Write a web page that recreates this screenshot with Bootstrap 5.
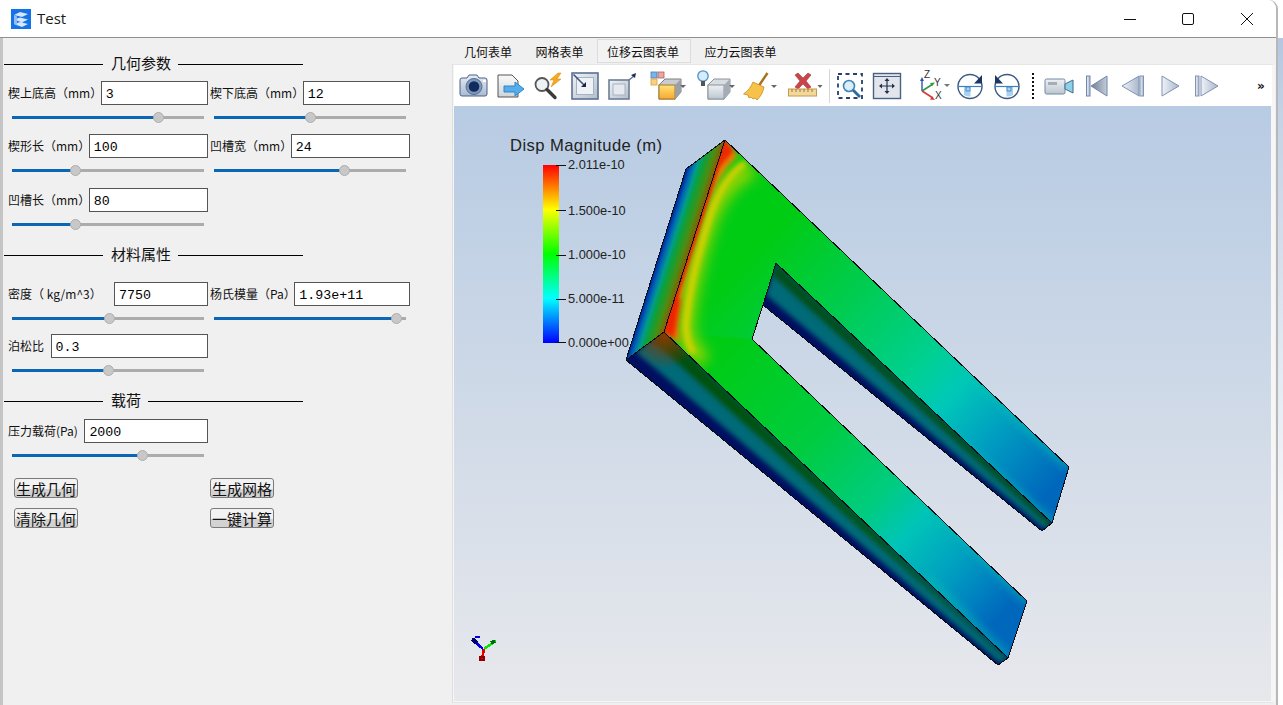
<!DOCTYPE html>
<html lang="zh-CN">
<head>
<meta charset="utf-8">
<title>Test</title>
<link href="https://cdn.jsdelivr.net/npm/bootstrap@5.3.0/dist/css/bootstrap.min.css" rel="stylesheet">
<style>
html,body{height:705px;overflow:hidden;background:#fff;}
body{font-family:"Noto Sans CJK SC","Noto Sans",sans-serif;font-size:12px;color:#111;}
.stage{width:1283px;height:705px;background:linear-gradient(#fff 38px,#b4c7e0 38px,#c3d2e5 110px,#fff 600px);}
.wnd{width:1278px;height:705px;border-right:2px solid #b8b8b8;background:#f0f0f0;border-top-right-radius:9px;border-top-left-radius:9px;}
.ttl{height:38px;background:#fff;border-bottom:1px solid #8f8f8f;border-top-right-radius:9px;border-top-left-radius:9px;padding-left:11px;}
.ttl-txt{font-family:"Open Sans",sans-serif;font-size:15px;margin-left:6px;color:#1a1a1a;}
.wb{width:58.5px;height:37px;}
.wmain{height:667px;border-left:3px solid #c4c4c4;box-shadow:inset 1px 0 0 #8f8f8f;}
.leftp{width:448px;background:#f0f0f0;padding-top:15px;flex:none;}
.sec{width:299px;height:22px;padding-bottom:2px;margin-left:1px;font-size:15px;color:#111;line-height:20px;}
.sec-a{width:99px;height:1px;background:#000;margin-top:2px;}
.sec-b{height:1px;background:#000;margin-top:2px;}
.sec-t{margin:0 7px 0 8px;}
.frow{margin-left:5px;width:404px;}
.fcol{width:200px;margin-right:2px;flex:none;}
.flbl{margin-right:-1.5px;white-space:nowrap;line-height:24px;flex:none;}
.flbl-p{margin-right:6.500px;}
.w-dens{width:106px;margin-right:0;}
.qin.form-control{height:24px;min-height:24px;padding:3px 4px 0;border:1px solid #555;border-radius:0;font-family:"Liberation Mono",monospace;font-size:13.3px;line-height:18px;color:#000;background:#fff;min-width:0;flex:1 1 0;}
.sl.form-range{display:block;width:192px;height:24px;margin-left:4px;padding:0;}
.sl.form-range::-webkit-slider-runnable-track{height:3px;border-radius:0;background:linear-gradient(to right,#0c66b6 var(--p),#acacac var(--p));}
.sl.form-range::-webkit-slider-thumb{width:11px;height:11px;margin-top:-4px;background:#c8c8c8;border:1px solid #aeaeae;border-radius:50%;box-shadow:none;}
.m5{margin-bottom:5px;}.m6{margin-bottom:6px;}.m7{margin-bottom:7px;}.m8t{margin-top:8px;}.m10{margin-top:10px;}.m11{margin-top:11px;}
.m16{margin-bottom:16px;}.m4{margin-bottom:4px;}
.bts{margin-left:11px;}
.qbtn.btn{width:64px;height:20px;padding:0;margin-right:132px;font-family:"Noto Sans CJK SC",sans-serif;font-size:15px;line-height:17px;color:#111;border:1px solid #7a7a7a;border-radius:3px;background:linear-gradient(#f2f2f2 55%,#d2d2d2 55%);white-space:nowrap;}
.rightp{flex:1 1 auto;padding-left:1px;min-width:0;}
.qtabs.nav-tabs{height:26px;border:0;gap:3.5px;padding:1px 0 0 2px;}
.qtabs .nav-link{height:24px;padding:0 9px;font-size:12px;line-height:24px;color:#111;border:1px solid transparent;border-radius:0;background:transparent;}
.qtabs .nav-link.active{background:#f3f3f3;border-color:#dcdcdc;color:#111;padding-right:11px;}
.frame{width:823px;height:639px;border:1px solid #e6e6e6;border-left-color:#dedede;border-right:3px solid #f6f6f6;background:#f6f6f6;padding-left:1px;}
.tbar{height:41px;background:#fff;padding-left:1.5px;}
.tb{width:37px;height:41px;flex:none;}
.tb-d{width:49px;height:41px;flex:none;}
.tb-e{width:41px;height:41px;flex:none;}
.tsep{width:1px;height:34px;background:#d6d6d6;margin:0 2px 0 0;}
.tdots{width:0;height:26px;border-left:2px dotted #111;margin:0 7px 0 6px;}
.gap9{margin-left:9px;}
.more{margin-left:auto;width:15px;font-weight:700;font-size:12px;font-family:"DejaVu Sans",sans-serif;color:#111;}
.view{width:817px;height:595px;background:linear-gradient(#b7cbe3,#e7e8ec);}
.view svg{display:block;}
.cbtxt{font-family:"Liberation Sans",sans-serif;font-size:12.8px;fill:#222;}
.cbttl{font-family:"Liberation Sans",sans-serif;font-size:16.6px;fill:#222;letter-spacing:.42px;}
.axt{font-family:"Liberation Sans",sans-serif;font-size:10px;fill:#333;}
</style>
</head>
<body>
<svg width="0" height="0" class="d-block">
<defs>
<linearGradient id="gCam" x1="0" y1="0" x2="0" y2="1"><stop offset="0" stop-color="#e6ecf4"/><stop offset="1" stop-color="#a9bbd2"/></linearGradient>
<linearGradient id="gPap" x1="0" y1="0" x2="0" y2="1"><stop offset="0" stop-color="#fafafa"/><stop offset="1" stop-color="#cfd4da"/></linearGradient>
<linearGradient id="gFr" x1="0" y1="0" x2="1" y2="1"><stop offset="0" stop-color="#f0f3f7"/><stop offset="1" stop-color="#b4bdc9"/></linearGradient>
<linearGradient id="gOr" x1="0" y1="0" x2="0" y2="1"><stop offset="0" stop-color="#ffe27a"/><stop offset="1" stop-color="#f7a92c"/></linearGradient>
<linearGradient id="gGy" x1="0" y1="0" x2="0" y2="1"><stop offset="0" stop-color="#eef1f4"/><stop offset="1" stop-color="#bcc6d0"/></linearGradient>
<linearGradient id="gTri" x1="0" y1="0" x2="1" y2="0"><stop offset="0" stop-color="#f0f3f8"/><stop offset="1" stop-color="#aab6ca"/></linearGradient>
<linearGradient id="gTriD" x1="0" y1="0" x2="1" y2="0"><stop offset="0" stop-color="#6f7f95"/><stop offset="1" stop-color="#c4ccd8"/></linearGradient>
</defs>
</svg>
<div class="stage">
<div class="wnd d-flex flex-column">
  <div class="ttl d-flex align-items-center">
    <svg width="20" height="20" viewBox="0 0 20 20"><rect width="20" height="20" fill="#1473e6"/><path d="M3 6 9 3l8 2-6 3zM3 10.500l6-2 8 2-6 3zM3 15l6-2 8 2-6 3z" fill="#d6e6fb"/><path d="M3 6v9l3 1.500V7.500z" fill="#8fbdf4"/></svg>
    <span class="ttl-txt">Test</span>
    <div class="ms-auto d-flex">
      <div class="wb d-flex align-items-center justify-content-center"><svg width="14" height="14" viewBox="0 0 14 14"><path d="M1 7.500h12" stroke="#111" fill="none"/></svg></div>
      <div class="wb d-flex align-items-center justify-content-center"><svg width="14" height="14" viewBox="0 0 14 14"><rect x="1.500" y="1.500" width="11" height="11" rx="1.500" stroke="#111" fill="none"/></svg></div>
      <div class="wb d-flex align-items-center justify-content-center"><svg width="14" height="14" viewBox="0 0 14 14"><path d="M1 1l12 12M13 1 1 13" stroke="#111" fill="none"/></svg></div>
    </div>
  </div>
  <div class="wmain d-flex">
    <div class="leftp">
      <div class="sec d-flex align-items-center m6"><div class="sec-a"></div><span class="sec-t">几何参数</span><div class="sec-b flex-grow-1"></div></div>
      <div class="frow d-flex m5">
        <div class="fcol"><div class="d-flex"><span class="flbl">楔上底高（mm）</span><input class="qin form-control" value="3"></div><input type="range" class="sl form-range" min="0" max="100" step="any" value="77.9" style="--p:76%"></div>
        <div class="fcol"><div class="d-flex"><span class="flbl">楔下底高（mm）</span><input class="qin form-control" value="12"></div><input type="range" class="sl form-range" min="0" max="100" step="any" value="50.4" style="--p:50%"></div>
      </div>
      <div class="frow d-flex m6">
        <div class="fcol"><div class="d-flex"><span class="flbl">楔形长（mm）</span><input class="qin form-control" value="100"></div><input type="range" class="sl form-range" min="0" max="100" step="any" value="31.8" style="--p:33%"></div>
        <div class="fcol"><div class="d-flex"><span class="flbl">凹槽宽（mm）</span><input class="qin form-control" value="24"></div><input type="range" class="sl form-range" min="0" max="100" step="any" value="69.2" style="--p:68%"></div>
      </div>
      <div class="frow d-flex">
        <div class="fcol"><div class="d-flex"><span class="flbl">凹槽长（mm）</span><input class="qin form-control" value="80"></div><input type="range" class="sl form-range" min="0" max="100" step="any" value="31.8" style="--p:33%"></div>
      </div>
      <div class="sec d-flex align-items-center m8t m16"><div class="sec-a"></div><span class="sec-t">材料属性</span><div class="sec-b flex-grow-1"></div></div>
      <div class="frow d-flex m4">
        <div class="fcol"><div class="d-flex"><span class="flbl w-dens">密度（ kg/m^3）</span><input class="qin form-control" value="7750"></div><input type="range" class="sl form-range" min="0" max="100" step="any" value="50.6" style="--p:51%"></div>
        <div class="fcol"><div class="d-flex"><span class="flbl">杨氏模量（Pa）</span><input class="qin form-control" value="1.93e+11"></div><input type="range" class="sl form-range" min="0" max="100" step="any" value="97.7" style="--p:95%"></div>
      </div>
      <div class="frow d-flex">
        <div class="fcol"><div class="d-flex"><span class="flbl flbl-p">泊松比</span><input class="qin form-control" value="0.3"></div><input type="range" class="sl form-range" min="0" max="100" step="any" value="50" style="--p:50%"></div>
      </div>
      <div class="sec d-flex align-items-center m8t m7"><div class="sec-a"></div><span class="sec-t">载荷</span><div class="sec-b flex-grow-1"></div></div>
      <div class="frow d-flex">
        <div class="fcol"><div class="d-flex"><span class="flbl flbl-p">压力载荷(Pa)</span><input class="qin form-control" value="2000"></div><input type="range" class="sl form-range" min="0" max="100" step="any" value="68.8" style="--p:68%"></div>
      </div>
      <div class="bts d-flex m11"><button class="qbtn btn">生成几何</button><button class="qbtn btn">生成网格</button></div>
      <div class="bts d-flex m10"><button class="qbtn btn">清除几何</button><button class="qbtn btn">一键计算</button></div>
    </div>
    <div class="rightp">
      <ul class="qtabs nav nav-tabs">
        <li class="nav-item"><a class="nav-link" href="#">几何表单</a></li>
        <li class="nav-item"><a class="nav-link" href="#">网格表单</a></li>
        <li class="nav-item"><a class="nav-link active" href="#">位移云图表单</a></li>
        <li class="nav-item"><a class="nav-link" href="#">应力云图表单</a></li>
      </ul>
      <div class="frame">
        <div class="tbar d-flex align-items-center">
          <!-- camera -->
          <div class="tb d-flex align-items-center justify-content-center"><svg width="30" height="28" viewBox="0 0 30 28"><path d="M3 6h5l2-3h8l2 3h6a2 2 0 0 1 2 2v14a2 2 0 0 1-2 2H3a2 2 0 0 1-2-2V8a2 2 0 0 1 2-2z" fill="url(#gCam)" stroke="#4b6386"/><circle cx="15" cy="14.500" r="8" fill="#7c98bb" stroke="#56708f"/><circle cx="15" cy="14.500" r="5.300" fill="#132a5e"/><rect x="24" y="8" width="3" height="2" fill="#fff"/></svg></div>
          <!-- export -->
          <div class="tb d-flex align-items-center justify-content-center"><svg width="30" height="28" viewBox="0 0 30 28"><path d="M2 3h14l6 6v16H2z" fill="url(#gPap)" stroke="#555"/><path d="M8 14h11v-4l9 7-9 7v-4H8z" fill="#55ace9" stroke="#2f86cb"/></svg></div>
          <!-- find data -->
          <div class="tb d-flex align-items-center justify-content-center"><svg width="30" height="28" viewBox="0 0 30 28"><circle cx="9" cy="12.500" r="6.500" fill="#eef2f6" stroke="#555" stroke-width="1.800"/><path d="M14 17.500l8 8" stroke="#3a3a3a" stroke-width="3.400" stroke-linecap="round"/><path d="M25 1l-8 7h4l-3 7 10-8h-4l4-6z" fill="#f6a81f" stroke="#d88708" stroke-width=".5"/></svg></div>
          <!-- reset 1 -->
          <div class="tb d-flex align-items-center justify-content-center"><svg width="28" height="28" viewBox="0 0 28 28"><rect x="1" y="1" width="26" height="26" fill="url(#gFr)" stroke="#5b7195" stroke-width="1.600"/><rect x="5.500" y="5.500" width="17" height="17" fill="#eef1f5" stroke="#a6b2c4"/><path d="M2.500 2.500 13 13" stroke="#3f5578" stroke-width="1.600"/><path d="M15 15H10l5-5z" fill="#14264c"/></svg></div>
          <!-- reset 2 -->
          <div class="tb d-flex align-items-center justify-content-center"><svg width="30" height="28" viewBox="0 0 30 28"><rect x="2" y="8" width="20" height="19" fill="url(#gFr)" stroke="#6c7e96" stroke-width="1.600"/><rect x="6" y="12" width="12" height="11" fill="#e6eaf0" stroke="#a6b2c4"/><path d="M22 8l5-4" stroke="#5b7195" stroke-width="1.400"/><path d="M29 1l-1 5-4-3z" fill="#1b3060"/></svg></div>
          <!-- color cube -->
          <div class="tb-d d-flex align-items-center"><svg width="49" height="41" viewBox="0 0 49 41"><rect x="10" y="7" width="6" height="6" fill="#7fb2e8" stroke="#3d7fc4" stroke-width=".8"/><rect x="17" y="7" width="6" height="6" fill="#e7a7a7" stroke="#b06060" stroke-width=".8"/><rect x="10" y="14" width="6" height="6" fill="#f8d27e" stroke="#d8a040" stroke-width=".8"/><path d="M18 20l6-6h16v13l-6 7H18z" fill="#c8ccd2" stroke="#7b7f85"/><rect x="18" y="20" width="16" height="14" fill="url(#gOr)" stroke="#a87822"/><path d="M34 20l6-6v13l-6 7z" fill="#9aa0a8"/><path d="M39 20h6l-3 3z" fill="#666"/></svg></div>
          <!-- bulb cube -->
          <div class="tb-d d-flex align-items-center"><svg width="49" height="41" viewBox="0 0 49 41"><path d="M18 20l6-6h16v13l-6 7H18z" fill="#d8dde2" stroke="#8b929a"/><rect x="18" y="20" width="16" height="14" fill="url(#gGy)" stroke="#8b929a"/><path d="M34 20l6-6v13l-6 7z" fill="#a4acb6"/><circle cx="13" cy="11" r="5.200" fill="#d4ecfb" stroke="#4d90c8" stroke-width="1.300"/><rect x="11" y="16" width="4" height="5" fill="#555"/><path d="M39 20h6l-3 3z" fill="#666"/></svg></div>
          <!-- broom -->
          <div class="tb-d d-flex align-items-center"><svg width="49" height="41" viewBox="0 0 49 41"><path d="M28.500 8 19 22" stroke="#a8701c" stroke-width="2.400"/><path d="M14 17 25 22C24 28 21 32 18 35L16 33 14 34 12 32 10 33 9 30 4.500 29C9 26 12 22 14 17Z" fill="#f7c24a" stroke="#c98b1d" stroke-width=".8"/><path d="M32 20h6l-3 3z" fill="#666"/></svg></div>
          <!-- delete ruler -->
          <div class="tb-e d-flex align-items-center"><svg width="37" height="41" viewBox="0 0 37 41"><path d="M7 10l3-2 5 5 5-5 3 2-5 6 5 6-3 2-5-5-5 5-3-2 5-6z" fill="#c9454a" stroke="#a83035" stroke-width=".6"/><rect x=".5" y="24" width="28" height="7" fill="#f2d89a" stroke="#c79a4a"/><path d="M4 24v3M8 24v3M12 24v3M16 24v3M20 24v3M24 24v3" stroke="#9b7a3a"/><path d="M29.500 20h5l-2.500 3z" fill="#666"/></svg></div>
          <div class="tsep"></div>
          <!-- zoom box -->
          <div class="tb d-flex align-items-center justify-content-center"><svg width="28" height="28" viewBox="0 0 28 28"><rect x="2" y="2" width="24" height="24" fill="#fff" stroke="#27406f" stroke-width="1.800" stroke-dasharray="4 3.500"/><circle cx="13" cy="14" r="5.500" fill="#dcedf8" stroke="#3a86b8" stroke-width="1.600"/><path d="M17 18l7 7" stroke="#2a6a9c" stroke-width="2.800"/></svg></div>
          <!-- pan window -->
          <div class="tb d-flex align-items-center justify-content-center"><svg width="30" height="28" viewBox="0 0 30 28"><rect x="1.500" y="1.500" width="27" height="25" fill="#e2e6ec" stroke="#4a6080" stroke-width="1.400"/><path d="M1.500 4.500h27" stroke="#4a6080"/><path d="M15 8v12M9 14h12" stroke="#22314f" stroke-width="1.200"/><path d="M15 6l-2.500 3h5zM15 22l-2.500-3h5zM7 14l3-2.500v5zM23 14l-3-2.500v5z" fill="#22314f"/></svg></div>
          <!-- axes -->
          <div class="tb gap9 d-flex align-items-center justify-content-center"><svg width="37" height="41" viewBox="0 0 37 41"><path d="M7 26V15" stroke="#2b55b5" stroke-width="1.400"/><path d="M7 12l-2 4h4z" fill="#2b55b5"/><path d="M7 26l11-7" stroke="#2d9a3e" stroke-width="1.600"/><path d="M20 17.500l-5 .5 2 3z" fill="#2d9a3e"/><path d="M7 26l11 7" stroke="#d43838" stroke-width="1.600"/><path d="M20 35l-5-.5 2-3z" fill="#d43838"/><text x="9" y="13" class="axt">Z</text><text x="19" y="21" class="axt">Y</text><text x="20" y="34" class="axt">X</text><path d="M29 19h6l-3 3z" fill="#777"/></svg></div>
          <!-- rotate cw -->
          <div class="tb d-flex align-items-center justify-content-center"><svg width="28" height="28" viewBox="0 0 28 28"><path d="M8 14.500h6.500v10A11 11 0 0 1 8 23z" fill="#a8d3f0"/><circle cx="14" cy="14.500" r="12" fill="none" stroke="#3d5a80" stroke-width="1.400"/><path d="M2 14.500h24" stroke="#3d7fc0" stroke-width="1.200"/><rect x="10" y="15" width="4" height="4" fill="none" stroke="#3d7fc0" stroke-width=".8"/><path d="M26 3v8.500h-8z" fill="#1c3764"/></svg></div>
          <!-- rotate ccw -->
          <div class="tb d-flex align-items-center justify-content-center"><svg width="28" height="28" viewBox="0 0 28 28"><path d="M20 14.500h-6.500v10A11 11 0 0 0 20 23z" fill="#a8d3f0"/><circle cx="14" cy="14.500" r="12" fill="none" stroke="#3d5a80" stroke-width="1.400"/><path d="M2 14.500h24" stroke="#3d7fc0" stroke-width="1.200"/><rect x="14" y="15" width="4" height="4" fill="none" stroke="#3d7fc0" stroke-width=".8"/><path d="M2 3v8.500h8z" fill="#1c3764"/></svg></div>
          <div class="tdots"></div>
          <!-- video -->
          <div class="tb d-flex align-items-center justify-content-center"><svg width="30" height="28" viewBox="0 0 30 28"><rect x="1" y="7" width="20" height="15" rx="1.500" fill="url(#gGy)" stroke="#7388a4"/><rect x="4" y="10" width="9" height="3" fill="#a5adb8"/><path d="M21 12l8-4v13l-8-4z" fill="#8fd0e4" stroke="#3d6a90"/></svg></div>
          <!-- first -->
          <div class="tb d-flex align-items-center justify-content-center"><svg width="24" height="24" viewBox="0 0 24 24"><rect x="2.500" y="2" width="3.500" height="20" fill="url(#gTri)" stroke="#7187ab"/><path d="M23 2 7 12l16 10z" fill="url(#gTriD)" stroke="#7187ab"/></svg></div>
          <!-- prev -->
          <div class="tb d-flex align-items-center justify-content-center"><svg width="24" height="24" viewBox="0 0 24 24"><path d="M1 12 18 2v20z" fill="url(#gTri)" stroke="#7f93b5"/><rect x="19" y="2" width="3.500" height="20" fill="url(#gTri)" stroke="#7f93b5"/></svg></div>
          <!-- next -->
          <div class="tb d-flex align-items-center justify-content-center"><svg width="24" height="24" viewBox="0 0 24 24"><path d="M4 2l17 10L4 22z" fill="url(#gTri)" stroke="#7f93b5"/></svg></div>
          <!-- last -->
          <div class="tb d-flex align-items-center justify-content-center"><svg width="26" height="24" viewBox="0 0 26 24"><rect x="1.500" y="2" width="3.500" height="20" fill="url(#gTri)" stroke="#7f93b5"/><path d="M7 2l17 10L7 22z" fill="url(#gTri)" stroke="#7f93b5"/></svg></div>
          <div class="more">»</div>
        </div>
        <div class="view">
          <svg width="817" height="595" viewBox="454 105 817 595">
            <defs>
              <filter id="b3" filterUnits="userSpaceOnUse" x="454" y="105" width="817" height="595"><feGaussianBlur stdDeviation="2.500"/></filter>
              <filter id="b4" filterUnits="userSpaceOnUse" x="454" y="105" width="817" height="595"><feGaussianBlur stdDeviation="4"/></filter>
              <filter id="b8" filterUnits="userSpaceOnUse" x="454" y="105" width="817" height="595"><feGaussianBlur stdDeviation="7"/></filter>
              <filter id="b1" filterUnits="userSpaceOnUse" x="454" y="105" width="817" height="595"><feGaussianBlur stdDeviation="1.600"/></filter>
              <linearGradient id="jet" x1="0" y1="1" x2="0" y2="0"><stop offset="0" stop-color="#0000ff"/><stop offset=".25" stop-color="#00ffff"/><stop offset=".5" stop-color="#00ff00"/><stop offset=".75" stop-color="#ffff00"/><stop offset="1" stop-color="#ff0000"/></linearGradient>
              <linearGradient id="gU" gradientUnits="userSpaceOnUse" x1="725" y1="139" x2="1088" y2="483"><stop offset=".2" stop-color="#00cc14"/><stop offset=".4" stop-color="#00cc50"/><stop offset=".59" stop-color="#00d090"/><stop offset=".68" stop-color="#00c8b8"/><stop offset=".78" stop-color="#00a4c0"/><stop offset=".86" stop-color="#0088c0"/><stop offset=".95" stop-color="#0068bc"/></linearGradient>
              <linearGradient id="gL" gradientUnits="userSpaceOnUse" x1="725" y1="139" x2="1131" y2="524"><stop offset=".25" stop-color="#00cc14"/><stop offset=".48" stop-color="#00cc40"/><stop offset=".64" stop-color="#00cc80"/><stop offset=".72" stop-color="#00c4b8"/><stop offset=".82" stop-color="#00a0c0"/><stop offset=".89" stop-color="#0080c0"/><stop offset=".94" stop-color="#0068bc"/></linearGradient>
              <linearGradient id="gLeft" gradientUnits="userSpaceOnUse" x1="656" y1="263" x2="686" y2="272.500"><stop offset="0" stop-color="#00249a"/><stop offset=".16" stop-color="#0068b4"/><stop offset=".3" stop-color="#009c8c"/><stop offset=".45" stop-color="#0aa23c"/><stop offset=".7" stop-color="#4a8e10"/><stop offset=".88" stop-color="#8a5c08"/><stop offset="1" stop-color="#a23c08"/></linearGradient>
              <linearGradient id="gArmDk" gradientUnits="userSpaceOnUse" x1="664" y1="331" x2="1008" y2="657"><stop offset="0" stop-color="#00500c"/><stop offset=".6" stop-color="#005418"/><stop offset="1" stop-color="#005a60"/></linearGradient>
              <radialGradient id="gBrown" gradientUnits="userSpaceOnUse" cx="664" cy="334" r="34"><stop offset="0" stop-color="#8a3a00"/><stop offset="1" stop-color="#8a3a00" stop-opacity="0"/></radialGradient>
              <clipPath id="cTop"><path d="M725 139 1069 466 1052 522 776 262 752 338 1027 600 1008 657 664 331Z"/></clipPath>
              <clipPath id="cLow"><path d="M664 331 1008 657 998 664 626 359Z"/></clipPath>
              <clipPath id="cSlot"><path d="M776 262 1052 522 1042 530 763 304Z"/></clipPath>
            </defs>
            <!-- scalar bar -->
            <text x="510" y="150" class="cbttl">Disp Magnitude (m)</text>
            <rect x="543" y="164" width="16" height="178" fill="url(#jet)"/>
            <path d="M556 164.500h10M556 209.500h10M556 254.500h10M556 298.500h10M556 341.500h10" stroke="#111"/>
            <text x="568" y="168" class="cbtxt">2.011e-10</text>
            <text x="568" y="214" class="cbtxt">1.500e-10</text>
            <text x="568" y="258" class="cbtxt">1.000e-10</text>
            <text x="568" y="302" class="cbtxt">5.000e-11</text>
            <text x="568" y="346" class="cbtxt">0.000e+00</text>
            <!-- left side face -->
            <path d="M686 168 725 139 664 331 626 359Z" fill="url(#gLeft)"/>
            <!-- lower side face -->
            <g clip-path="url(#cLow)">
              <path d="M664 331 1008 657 998 664 626 359Z" fill="#000f60"/>
              <path d="M664 331 1008 657 1000 662 636 351Z" fill="#006a78" filter="url(#b3)"/>
              <path d="M664 331 1008 657 1005 659 652 339Z" fill="url(#gArmDk)" filter="url(#b3)"/>
              <circle cx="664" cy="334" r="34" fill="url(#gBrown)"/>
            </g>
            <!-- slot wall -->
            <g clip-path="url(#cSlot)">
              <path d="M776 262 1052 522 1042 530 763 304Z" fill="#000f60"/>
              <path d="M776 262 1052 522 1044 528 766 294Z" fill="#006a78" filter="url(#b3)"/>
              <path d="M776 262 1052 522 1049 525 772 274Z" fill="#00501a" filter="url(#b3)"/>
            </g>
            <!-- top face -->
            <g clip-path="url(#cTop)">
              <path d="M725 139 1069 466 1052 522 776 262 752 338 1027 600 1008 657 664 331Z" fill="url(#gU)"/>
              <path d="M752 338 1027 600 1008 657 664 331Z" fill="url(#gL)"/>
              <path d="M960 363 1069 466M952 434 1052 522M940 512 1027 600M925 575 1008 657" stroke="#00c8b0" stroke-width="7" fill="none" opacity=".6" filter="url(#b4)"/>
              <path d="M752 168C726 180 712 205 704 235 696 262 688 295 686 325 686 338 692 350 704 360" stroke="#9ed400" stroke-width="16" fill="none" filter="url(#b8)"/>
              <path d="M745 162C722 178 712 205 704 235 696 262 688 295 686 325 686 338 690 348 694 352" stroke="#dcd000" stroke-width="6" fill="none" filter="url(#b3)"/>
              <path d="M725 139 738 155C718 172 706 205 698 235 690 262 680 295 678 325L680 342 664 331Z" fill="#ee8800" filter="url(#b3)"/>
              <path d="M725 139 664 331" stroke="#e03000" stroke-width="6" fill="none" filter="url(#b1)"/>
              <path d="M725 139 734 150 716 170ZM664 331 674 338 680 300 672 285Z" fill="#ee2400" filter="url(#b3)"/>
            </g>
            <!-- edges -->
            <g fill="none" stroke="#0c0c14" stroke-width="1" shape-rendering="crispEdges">
              <path d="M686 168 725 139 1069 466 1052 522 1042 530 763 304 752 338 1027 600 1008 657 998 664 626 359 686 168"/>
              <path d="M725 139 664 331 626 359M664 331 1008 657M776 262 1052 522M776 262 763 304"/>
            </g>
            <!-- orientation axes -->
            <g fill="none" stroke-width="2.500" shape-rendering="crispEdges">
              <path d="M483 648 472 638" stroke="#0000e8"/>
              <path d="M472 638 477 642" stroke="#00006a" stroke-width="4"/>
              <path d="M475 636h5" stroke="#0000e8" stroke-width="1.500"/>
              <path d="M484 648 496 640" stroke="#00e800"/>
              <path d="M491 642 495 640" stroke="#006a10" stroke-width="3.500"/>
              <path d="M484 648 482 658" stroke="#e80000"/>
              <path d="M480 656h4v3h-4z" stroke="#900000" stroke-width="2"/>
            </g>
          </svg>
        </div>
      </div>
    </div>
  </div>
</div>
</div>
<script src="https://cdn.jsdelivr.net/npm/bootstrap@5.3.0/dist/js/bootstrap.bundle.min.js"></script>
</body>
</html>
